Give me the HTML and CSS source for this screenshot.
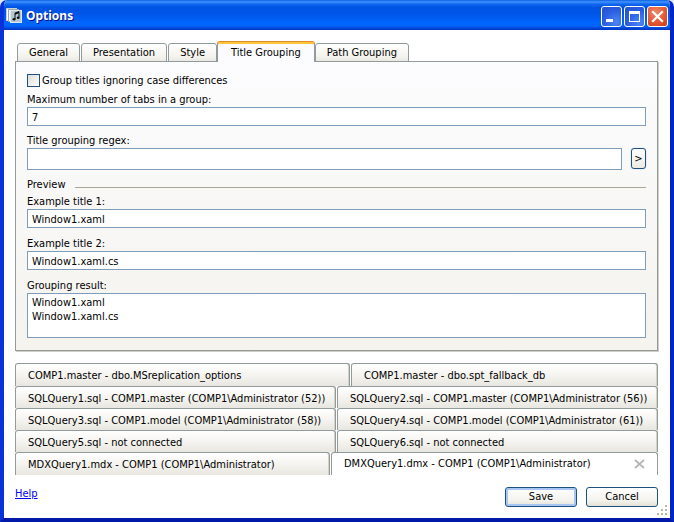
FILE: index.html
```html
<!DOCTYPE html>
<html lang="en">
<head>
<meta charset="utf-8">
<title>Options</title>
<link rel="stylesheet" href="styles.css">
</head>
<body>
<div class="window">
  <header class="titlebar">
    <svg class="app-icon" width="16" height="16" viewBox="0 0 16 16" aria-hidden="true">
      <rect x="0.5" y="0.5" width="10" height="12" fill="#fff" stroke="#c8d0d4"/>
      <rect x="2.5" y="1.5" width="10" height="12" fill="#f2f5f7" stroke="#9aa8b2"/>
      <rect x="4.5" y="2.5" width="11" height="12" fill="#b4c8d6" stroke="#dfe7ec"/>
      <path d="M9 11V5l4-1.5v6" fill="none" stroke="#101010"/>
      <path d="M9 5l4-1.500v1.800L9 6.800z" fill="#101010"/>
      <ellipse cx="8" cy="11.300" rx="1.500" ry="1.200" fill="#101010"/>
      <ellipse cx="12.200" cy="9.800" rx="1.400" ry="1.200" fill="#101010"/>
    </svg>
    <h1 class="title">Options</h1>
    <div class="captions">
      <button class="caption" type="button" aria-label="Minimize">
        <svg width="19" height="19" viewBox="0 0 19 19"><path d="M4 12h7v3H4z" fill="#fff"/></svg>
      </button>
      <button class="caption" type="button" aria-label="Maximize">
        <svg width="19" height="19" viewBox="0 0 19 19"><path d="M4 4h11v11H4zM5 7v7h9V7z" fill="#fff" fill-rule="evenodd"/></svg>
      </button>
      <button class="caption caption-close" type="button" aria-label="Close">
        <svg width="19" height="19" viewBox="0 0 19 19"><path d="M5 5l9 9M14 5l-9 9" stroke="#fff" stroke-width="2.2" stroke-linecap="square"/></svg>
      </button>
    </div>
  </header>

  <main class="content">
    <div class="tabs" role="tablist">
      <button class="tab" type="button" role="tab">General</button>
      <button class="tab" type="button" role="tab">Presentation</button>
      <button class="tab" type="button" role="tab">Style</button>
      <button class="tab tab-active" type="button" role="tab" aria-selected="true">Title Grouping</button>
      <button class="tab" type="button" role="tab">Path Grouping</button>
    </div>

    <section class="panel">
      <div class="check">
        <input type="checkbox" id="ignore-case">
        <label for="ignore-case">Group titles ignoring case differences</label>
      </div>
      <div class="fields">
        <div class="field">
          <label for="max-tabs">Maximum number of tabs in a group:</label>
          <input class="box" id="max-tabs" type="text" value="7">
        </div>
        <div class="field">
          <label for="regex">Title grouping regex:</label>
          <div class="regex-row">
            <input class="box box-tall" id="regex" type="text">
            <button class="more" type="button">&gt;</button>
          </div>
        </div>
      </div>
      <div class="divider"><span>Preview</span></div>
      <div class="fields fields-preview">
        <div class="field">
          <label for="example1">Example title 1:</label>
          <input class="box" id="example1" type="text" value="Window1.xaml">
        </div>
        <div class="field">
          <label for="example2">Example title 2:</label>
          <input class="box" id="example2" type="text" value="Window1.xaml.cs">
        </div>
        <div class="field">
          <label for="result">Grouping result:</label>
          <textarea class="box box-result" id="result" readonly>Window1.xaml
Window1.xaml.cs</textarea>
        </div>
      </div>
    </section>

    <div class="documents">
      <div class="doc-row doc-row-edge">
        <button class="doc doc-wide" type="button">COMP1.master - dbo.MSreplication_options</button>
        <button class="doc" type="button">COMP1.master - dbo.spt_fallback_db</button>
      </div>
      <div class="doc-row">
        <button class="doc" type="button">SQLQuery1.sql - COMP1.master (COMP1\Administrator (52))</button>
        <button class="doc" type="button">SQLQuery2.sql - COMP1.master (COMP1\Administrator (56))</button>
      </div>
      <div class="doc-row">
        <button class="doc" type="button">SQLQuery3.sql - COMP1.model (COMP1\Administrator (58))</button>
        <button class="doc" type="button">SQLQuery4.sql - COMP1.model (COMP1\Administrator (61))</button>
      </div>
      <div class="doc-row">
        <button class="doc" type="button">SQLQuery5.sql - not connected</button>
        <button class="doc" type="button">SQLQuery6.sql - not connected</button>
      </div>
      <div class="doc-row doc-row-edge">
        <button class="doc doc-narrow" type="button">MDXQuery1.mdx - COMP1 (COMP1\Administrator)</button>
        <div class="doc doc-active">
          <button class="doc-name" type="button">DMXQuery1.dmx - COMP1 (COMP1\Administrator)</button>
          <button class="doc-close" type="button" aria-label="Close tab">
            <svg width="11" height="10" viewBox="0 0 11 10"><path d="M1 1l9 8M10 1L1 9" stroke="#b5b5b5" stroke-width="1.7"/></svg>
          </button>
        </div>
      </div>
    </div>

    <footer class="footer">
      <a class="help" href="#help">Help</a>
      <button class="action action-default" type="button">Save</button>
      <button class="action" type="button">Cancel</button>
    </footer>
  </main>
  <svg class="grip" width="10" height="10" viewBox="0 0 10 10" aria-hidden="true">
    <path d="M8 0h2v2H8zM4 4h2v2H4zM8 4h2v2H8zM0 8h2v2H0zM4 8h2v2H4zM8 8h2v2H8z" fill="#b8b4a2"/>
  </svg>
</div>
</body>
</html>
```
FILE: styles.css
```css
* {
  box-sizing: border-box;
}

body {
  margin: 0;
  background: #dfe8f8;
  color: #000;
  font: 11px/14px "DejaVu Sans Condensed", "DejaVu Sans", sans-serif;
}

button,
input,
textarea {
  margin: 0;
  font: inherit;
  color: inherit;
}

.window {
  position: relative;
  display: flex;
  flex-direction: column;
  min-height: 100vh;
  overflow: hidden;
  border-radius: 7px 7px 0 0;
  background: #fff;
  border: solid;
  border-width: 0 4px 4px;
  border-color: #0831d9 #0026c8 #0019a8 #0831d9;
}

.titlebar {
  display: flex;
  align-items: center;
  height: 30px;
  margin: 0 -4px;
  padding: 2px 6px 0;
  background: linear-gradient(#0f5fe0 0, #3f94ff 2px, #1268f0 4px, #0054e3 7px, #0055e8 14px, #0066ff 23px, #0064fa 26px, #0048d8 28px, #0036c0 30px);
}

.title {
  flex: 1;
  margin: 0 0 0 4px;
  color: #fff;
  font: bold 12px/18px "Noto Sans", sans-serif;
  text-shadow: 1px 1px #0f1089;
}

.captions {
  display: flex;
  gap: 2px;
}

.caption {
  width: 21px;
  height: 21px;
  padding: 0;
  border: 1px solid #fff;
  border-radius: 3px;
  background: radial-gradient(circle at 75% 80%, #4a85f5, #2a5ce0 60%, #2250c8);
}

.caption svg {
  display: block;
}

.caption-close {
  background: radial-gradient(circle at 40% 30%, #f0886a, #e0552f 60%, #c83c18);
}

.content {
  flex: 1;
  display: flex;
  flex-direction: column;
  padding: 11px 12px 11px 11px;
}

.tabs {
  display: flex;
  align-items: flex-end;
  gap: 1px;
  height: 21px;
  padding-left: 2px;
  margin-bottom: -1px;
}

.tab {
  height: 19px;
  padding: 1px 11px 0;
  border: 1px solid #919b9c;
  border-radius: 3px 3px 0 0;
  background: linear-gradient(#fff, #f4f3ee 70%, #eae8e2);
  white-space: nowrap;
}

.tab-active {
  height: 20px;
  margin: 0 -1px;
  padding: 0 13px;
  border-top: 2px solid #ffc73c;
  border-bottom: 0;
  background: #fcfcfe;
  z-index: 1;
  box-shadow: 0 -1px #e68b2c;
}

.panel {
  padding: 11px 11px 12px;
  border: 1px solid #919b9c;
  background: linear-gradient(#fcfcfe, #f4f3ee);
  box-shadow: 1px 1px #d0cebf;
}

.check {
  display: flex;
  align-items: center;
  gap: 2px;
  height: 15px;
  margin-bottom: 4px;
}

.check input {
  appearance: none;
  width: 13px;
  height: 13px;
  border: 1px solid #1c5180;
  background: linear-gradient(135deg, #dcdcd7, #fff);
}

.fields {
  display: grid;
  gap: 7px;
}

.fields-preview {
  gap: 8px;
}

.field {
  display: grid;
}

.field label {
  height: 15px;
  line-height: 16px;
}

.box {
  width: 100%;
  height: 19px;
  padding: 1px 4px 0;
  border: 1px solid #7f9db9;
  border-radius: 0;
  background: #fff;
}

.box-tall {
  height: 22px;
}

.box-result {
  display: block;
  height: 45px;
  padding: 2px 4px;
  resize: none;
  overflow: hidden;
}

.regex-row {
  display: flex;
  gap: 9px;
}

.more {
  flex: none;
  width: 15px;
  height: 21px;
  padding: 0;
  border: 1px solid #1c5180;
  border-radius: 3px;
  background: linear-gradient(#fff, #eceae0);
  box-shadow: 0 0 1px #7f9db9;
}

.divider {
  display: flex;
  align-items: center;
  gap: 10px;
  margin: 8px 0 2px;
}

.divider::after {
  content: "";
  flex: 1;
  height: 1px;
  margin-top: 4px;
  background: #a8a793;
}

.documents {
  margin-top: 12px;
}

.doc-row {
  display: flex;
  gap: 1px;
  height: 22px;
}

.doc-row-edge {
  height: 23px;
}

.doc {
  flex: 1;
  min-width: 0;
  padding: 2px 12px 0;
  border: 1px solid #919b9c;
  border-bottom: 0;
  border-radius: 3px 3px 0 0;
  background: linear-gradient(#fff, #f5f4f0 50%, #e8e6e0);
  box-shadow: inset -1px 0 #d6d3c2;
  text-align: left;
  white-space: nowrap;
}

.doc-wide {
  flex-grow: 1.1;
}

.doc-narrow {
  flex-grow: 0.96;
}

.doc-active {
  display: flex;
  align-items: center;
  justify-content: space-between;
  padding: 0 12px;
  background: #fff;
  box-shadow: none;
}

.doc-name,
.doc-close {
  padding: 0;
  border: 0;
  background: none;
}

.doc-close svg {
  display: block;
}

.footer {
  display: flex;
  align-items: center;
  gap: 9px;
  margin-top: 12px;
}

.help {
  margin: 0 auto 6px 0;
  color: #00f;
}

.action {
  width: 72px;
  height: 20px;
  padding: 0;
  border: 1px solid #1c5180;
  border-radius: 3px;
  background: linear-gradient(#fff, #f3f2ec 70%, #e4e2d6);
}

.action-default {
  box-shadow: inset 0 0 0 2px #a9c5f3;
}

.grip {
  position: absolute;
  right: 3px;
  bottom: 3px;
}
```
